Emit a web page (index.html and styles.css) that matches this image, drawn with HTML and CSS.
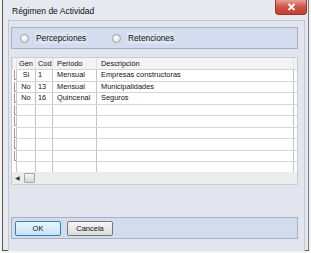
FILE: index.html
```html
<!DOCTYPE html>
<html lang="es">

<head>
    <meta charset="UTF-8">
    <title>Régimen de Actividad</title>
    <link rel="stylesheet" href="styles.css">
</head>

<body>

    <div class="window">
        <div class="titlebar">
            <span class="title">Régimen de Actividad</span>
            <div class="close-btn">
                <svg width="9" height="8" viewBox="0 0 9 8">
                    <path d="M1.5 1 L7.5 7 M7.5 1 L1.5 7" stroke="#fff" stroke-width="1.8" />
                </svg>
            </div>
        </div>

        <div class="client">
            <div class="panel radio-panel">
                <label class="radio"><span class="dot"></span><span class="radio-text">Percepciones</span></label>
                <label class="radio"><span class="dot"></span><span class="radio-text">Retenciones</span></label>
            </div>

            <div class="grid">
                <div class="grid-body">
                    <table>
                        <colgroup>
                            <col class="c-ind">
                            <col class="c-gen">
                            <col class="c-cod">
                            <col class="c-per">
                            <col class="c-desc">
                            <col class="c-fill">
                        </colgroup>
                        <tr class="head">
                            <td class="ind"></td>
                            <td class="tight">Gen</td>
                            <td class="tight">Cod</td>
                            <td>Periodo</td>
                            <td>Descripción</td>
                            <td class="fill"></td>
                        </tr>
                        <tr>
                            <td class="ind"><span></span></td>
                            <td class="center">Si</td>
                            <td class="tight">1</td>
                            <td>Mensual</td>
                            <td>Empresas constructoras</td>
                            <td class="fill"></td>
                        </tr>
                        <tr>
                            <td class="ind"><span></span></td>
                            <td class="center">No</td>
                            <td class="tight">13</td>
                            <td>Mensual</td>
                            <td>Municipalidades</td>
                            <td class="fill"></td>
                        </tr>
                        <tr>
                            <td class="ind"><span></span></td>
                            <td class="center">No</td>
                            <td class="tight">16</td>
                            <td>Quincenal</td>
                            <td>Seguros</td>
                            <td class="fill"></td>
                        </tr>
                        <tr><td class="ind"><span></span></td><td></td><td></td><td></td><td></td><td class="fill"></td></tr>
                        <tr><td class="ind"><span></span></td><td></td><td></td><td></td><td></td><td class="fill"></td></tr>
                        <tr><td class="ind"><span></span></td><td></td><td></td><td></td><td></td><td class="fill"></td></tr>
                        <tr><td class="ind"><span></span></td><td></td><td></td><td></td><td></td><td class="fill"></td></tr>
                        <tr><td class="ind"><span></span></td><td></td><td></td><td></td><td></td><td class="fill"></td></tr>
                        <tr class="last"><td class="ind"></td><td></td><td></td><td></td><td></td><td class="fill"></td></tr>
                    </table>
                </div>
                <div class="hscroll">
                    <span class="arrow">&#9664;</span>
                    <span class="thumb"></span>
                </div>
            </div>

            <div class="panel button-panel">
                <button class="btn btn-default">OK</button>
                <button class="btn">Cancela</button>
            </div>
        </div>
    </div>

</body>

</html>
```

FILE: styles.css
```css
body {
    margin: 0;
    padding: 0;
    background-color: #f2f2f2;
    font-family: 'Liberation Sans', Arial, sans-serif;
    color: #1a1a1a;
}

.window {
    margin-left: 2px;
    width: 297px;
    height: 248px;
    padding: 0 3px 2px 5px;
    border-left: 1px solid #5a5a5a;
    border-right: 1px solid #7a7a7a;
    border-bottom: 1px solid #5a5a5a;
    background-color: #e6e9ef;
}

.titlebar {
    display: flex;
    height: 20px;
}

.title {
    margin-left: 4px;
    margin-top: 6px;
    font-size: 8.5px;
    color: #111;
}

.close-btn {
    margin-left: auto;
    margin-right: -2px;
    width: 30px;
    height: 14px;
    display: flex;
    align-items: center;
    justify-content: center;
    border: 1px solid #8e3a2e;
    border-top: none;
    border-radius: 0 0 4px 4px;
    background: linear-gradient(#e8a093, #cf5444 50%, #c2402f);
}

.client {
    height: 219px;
    padding: 6px 5px 6px 2px;
    border: 1px solid #c3c7d0;
    background-color: #e2e5ee;
}

.panel {
    width: 285px;
    height: 20px;
    border: 1px solid #a8b0c1;
    background-color: #d3dbee;
    display: flex;
    align-items: center;
}

.radio {
    display: flex;
    align-items: center;
    font-size: 8.3px;
    color: #111;
}

.radio:first-child {
    margin-left: 8px;
    width: 92px;
}

.dot {
    width: 7px;
    height: 7px;
    border-radius: 50%;
    border: 1px solid #9aa0a8;
    background: radial-gradient(circle at 40% 40%, #ffffff, #d6d8dc);
    margin-right: 6px;
}

.radio-text {
    padding: 1px 1px;
    background-color: #dce3f1;
}

.grid {
    margin-top: 8px;
    width: 285px;
    height: 126px;
    border: 1px solid #c9ccd2;
    background-color: #ececec;
}

.grid-body {
    height: 114px;
    overflow: hidden;
    background-color: #fff;
}

.grid table {
    width: 284px;
    table-layout: fixed;
    border-collapse: collapse;
    font-size: 7.4px;
    color: #111;
}

.c-ind { width: 4px; }
.c-gen { width: 19px; }
.c-cod { width: 17px; }
.c-per { width: 44px; }
.c-desc { width: 197px; }
.c-fill { width: 3px; }

.grid td {
    height: 10.5px;
    padding: 0 0 0 4px;
    border-bottom: 1px solid #d4d4d4;
    border-left: 1px solid #c4c4c4;
    white-space: nowrap;
    overflow: hidden;
    line-height: 10px;
}

.grid td.tight {
    padding-left: 2px;
}

.grid td.center {
    text-align: center;
    padding: 0;
}

.grid tr.head td {
    height: 11px;
    background-color: #f3f3f3;
    border-left: 1px solid #e2e2e2;
}

.grid td.ind {
    padding: 0;
    border-left: none;
    border-bottom: none;
}

.grid td.ind span {
    display: block;
    margin-left: 1px;
    width: 2px;
    height: 9px;
    border-left: 1px solid #9a9a9a;
    border-bottom: 1px solid #9a9a9a;
}

.grid td.fill {
    padding: 0;
    border-left: 1px solid #c4c4c4;
}

.grid tr.last td {
    border-bottom: none;
    height: 12px;
}

.hscroll {
    height: 11px;
    display: flex;
    align-items: center;
}

.arrow {
    margin-left: 3px;
    font-size: 6px;
    color: #333;
}

.thumb {
    margin-left: 4px;
    width: 9px;
    height: 8px;
    border: 1px solid #a4a4a4;
    border-radius: 1px;
    background: linear-gradient(#f4f4f4, #d6d6d6);
}

.button-panel {
    margin-top: 32px;
    gap: 6px;
}

.btn {
    margin: 0;
    padding: 0;
    width: 46px;
    height: 15px;
    font-family: 'Liberation Sans', Arial, sans-serif;
    font-size: 7.5px;
    color: #111;
    border: 1px solid #777;
    border-radius: 2px;
    background: linear-gradient(#f6f6f6, #dcdcdc);
}

.btn-default {
    margin-left: 3px;
    border-color: #3c7fb1;
    background: linear-gradient(#eaf6fd, #c4e2f5);
}
```
